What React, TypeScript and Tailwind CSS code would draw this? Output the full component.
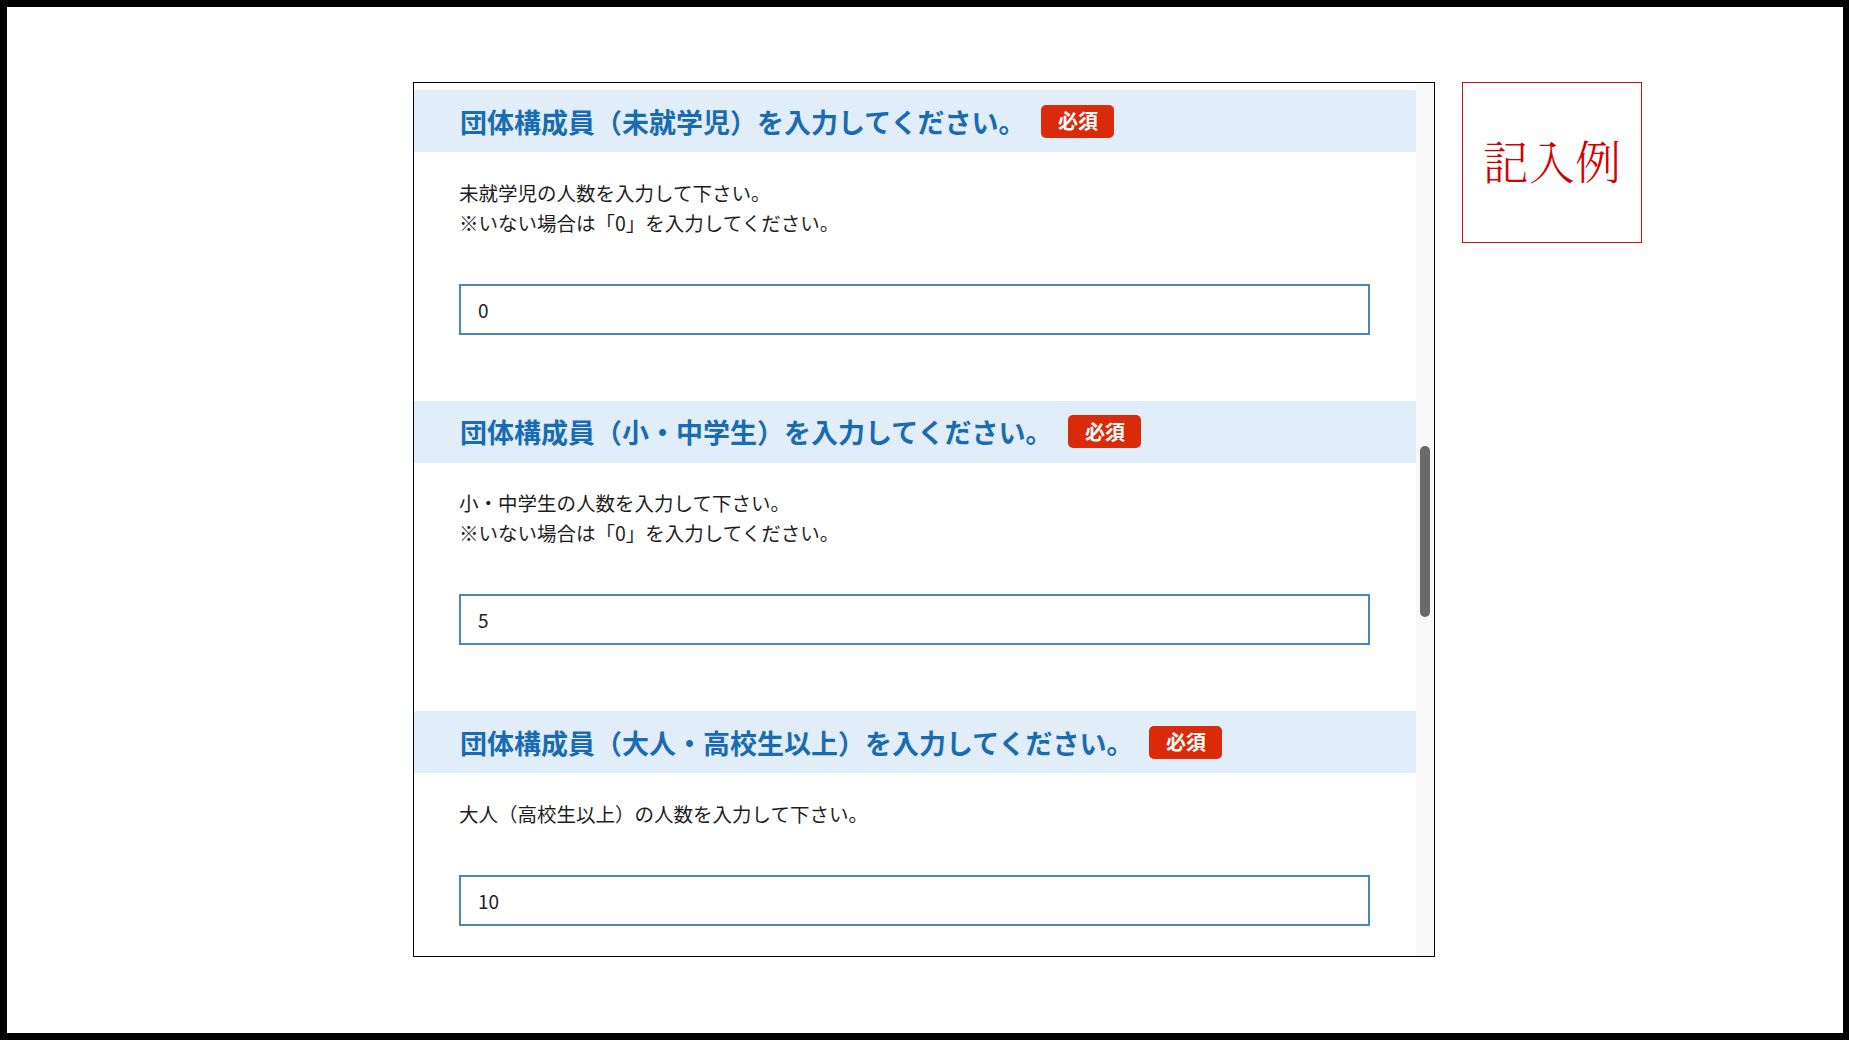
import React from "react";

const jp = { fontFamily: '"Noto Sans CJK JP", "Noto Sans", sans-serif' };

type Sec = { title: string; lines: string[]; value: string; gapTop: string };

const sections: Sec[] = [
  {
    title: "団体構成員（未就学児）を入力してください。",
    lines: ["未就学児の人数を入力して下さい。", "※いない場合は「0」を入力してください。"],
    value: "0",
    gapTop: "",
  },
  {
    title: "団体構成員（小・中学生）を入力してください。",
    lines: ["小・中学生の人数を入力して下さい。", "※いない場合は「0」を入力してください。"],
    value: "5",
    gapTop: "mt-[66px]",
  },
  {
    title: "団体構成員（大人・高校生以上）を入力してください。",
    lines: ["大人（高校生以上）の人数を入力して下さい。"],
    value: "10",
    gapTop: "mt-[66px]",
  },
];

function Section({ s }: { s: Sec }) {
  return (
    <div className={s.gapTop}>
      <div className="h-[62px] bg-[#e1eef9] flex items-center pl-[46px]">
        <span className="text-[27px] leading-none font-bold text-[#1a6cb2]">{s.title}</span>
        <span className="ml-[16px] w-[73px] h-[33px] rounded-[5px] bg-[#d92a0a] text-white text-[20px] font-bold flex items-center justify-center leading-none">
          必須
        </span>
      </div>
      <div className="pl-[45px]">
        <div className="mt-[25.5px] text-[19.5px] leading-[30px] text-[#1e1e1e]">
          {s.lines.map((l, i) => (
            <div key={i}>{l}</div>
          ))}
        </div>
        <input
          readOnly
          value={s.value}
          className="mt-[46px] block w-[911px] h-[51px] border-2 border-[#4a87bf] pl-[17px] text-[19px] text-[#222] bg-white outline-none"
          style={jp}
        />
      </div>
    </div>
  );
}

export default function App() {
  return (
    <div
      className="w-[1849px] h-[1040px] bg-white border-black border-t-[7px] border-l-[7px] border-b-[7px] border-r-[6px] box-border flex items-start overflow-hidden"
      style={jp}
    >
      <div className="ml-[406px] mt-[75px] w-[1022px] h-[875px] border border-black box-border flex overflow-hidden bg-white">
        <div className="w-[1002px] pt-[7px] shrink-0">
          {sections.map((s, i) => (
            <Section key={i} s={s} />
          ))}
        </div>
        <div className="flex-1 bg-[#f8f8f8] pt-[363px] flex justify-center">
          <div className="w-[10px] h-[171px] rounded-full bg-[#6a6a6a]" />
        </div>
      </div>
      <div className="ml-[27px] mt-[75px] w-[180px] h-[161px] border border-[#cc1111] box-border flex items-center justify-center pb-[7px]">
        <span
          className="text-[46px] text-[#d40000] font-light leading-none"
          style={{ fontFamily: '"Noto Serif CJK JP", "Noto Serif JP", "IPAMincho", "Noto Sans CJK JP", serif' }}
        >
          記入例
        </span>
      </div>
    </div>
  );
}
